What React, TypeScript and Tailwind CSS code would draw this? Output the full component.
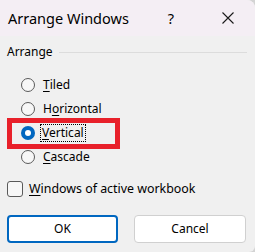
import React, { useState } from "react";

const options = ["Tiled", "Horizontal", "Vertical", "Cascade"];

function Radio({ checked }: { checked: boolean }) {
  return checked ? (
    <span className="w-[14px] h-[14px] rounded-full bg-[#0067c0] flex items-center justify-center shrink-0">
      <span className="w-[6px] h-[6px] rounded-full bg-white" />
    </span>
  ) : (
    <span className="w-[14px] h-[14px] rounded-full border border-[#5a5a5a] bg-[#f7f7f7] shrink-0" />
  );
}

function Label({ text, hot }: { text: string; hot: number }) {
  return (
    <span>
      {text.slice(0, hot)}
      <span className="underline underline-offset-2">{text.charAt(hot)}</span>
      {text.slice(hot + 1)}
    </span>
  );
}

export default function App() {
  const [selected, setSelected] = useState("Vertical");
  const hotKeys: Record<string, number> = { Tiled: 0, Horizontal: 1, Vertical: 0, Cascade: 0 };

  return (
    <div className="w-[255px] h-[252px] bg-[#d4d4d4] font-['Noto_Sans','Open_Sans',sans-serif] text-black">
      <div className="w-full h-full bg-[#f0f0f0] rounded-tr-[8px] rounded-br-[6px] overflow-hidden flex flex-col">
        {/* Title bar */}
        <div className="h-[36px] bg-[#f4eef4] flex items-center pl-[8px] shrink-0">
          <span className="text-[14.5px] leading-none">Arrange Windows</span>
          <span className="ml-[39px] text-[14.5px] leading-none">?</span>
          <svg className="ml-[48px]" width="12" height="12" viewBox="0 0 12 12">
            <path d="M0.5 0.5 L11.5 11.5 M11.5 0.5 L0.5 11.5" stroke="#1a1a1a" strokeWidth="1.1" />
          </svg>
        </div>

        {/* Group */}
        <div className="px-[7px] pt-[10px] text-[12px] leading-none">
          <div className="flex items-center gap-[6px]">
            <span>Arrange</span>
            <span className="flex-1 h-px bg-[#dcdcdc] mr-[1px]" />
          </div>
          <div className="flex flex-col mt-[15px]">
            {options.map((o) => {
              const on = selected === o;
              return (
                <div key={o} className="h-[24px] flex items-center">
                  <div
                    className={`flex items-center h-[31px] ${
                      on ? "border-[5px] border-[#e8202a] w-[113px] pl-[9px]" : "pl-[14px]"
                    }`}
                    onClick={() => setSelected(o)}
                  >
                    <Radio checked={on} />
                    <span
                      className={`ml-[6px] px-[1px] py-[2px] ${on ? "outline outline-1 outline-dotted outline-black" : "border border-transparent"}`}
                    >
                      <Label text={o} hot={hotKeys[o]} />
                    </span>
                  </div>
                </div>
              );
            })}
          </div>

          <div className="flex items-center mt-[12px]">
            <span className="w-[16px] h-[16px] rounded-[3px] border border-[#5a5a5a] bg-[#f7f7f7]" />
            <span className="ml-[6px] text-[12.4px]">
              <Label text="Windows of active workbook" hot={0} />
            </span>
          </div>

          <div className="flex gap-[16px] mt-[18px] pr-[2px]">
            <button className="w-[111px] h-[28px] rounded-[4px] border-2 border-[#0067c0] bg-white text-[12px]">OK</button>
            <button className="w-[112px] h-[28px] rounded-[4px] border border-[#d0d0d0] bg-white text-[12px]">Cancel</button>
          </div>
        </div>
      </div>
    </div>
  );
}
